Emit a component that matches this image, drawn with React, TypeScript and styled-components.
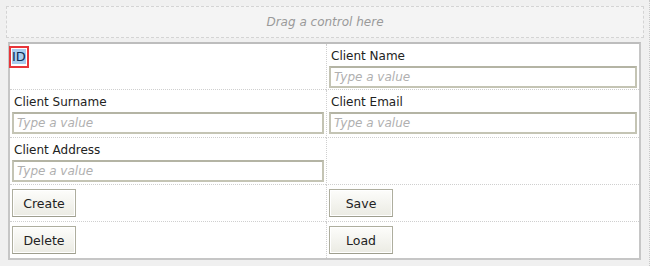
import React from "react";
import styled, { createGlobalStyle } from "styled-components";

const GlobalStyle = createGlobalStyle`
  html, body {
    margin: 0;
    padding: 0;
    background: #f0f0f0;
    font-family: "DejaVu Sans", Verdana, sans-serif;
  }
`;

const Page = styled.div`
  width: 650px;
  height: 266px;
  box-sizing: border-box;
  padding: 6px 6px 0 6px;
  border-right: 1px dotted #c8c8c8;
  display: flex;
  flex-direction: column;
  gap: 4px;
`;

const DropZone = styled.div`
  height: 32px;
  margin-right: -1px;
  box-sizing: border-box;
  border: 1px dashed #d4d4d4;
  background: #f4f4f4;
  display: flex;
  align-items: center;
  justify-content: center;
  color: #9a9a9a;
  font-style: italic;
  font-size: 12px;
`;

const Form = styled.div`
  margin: 0 2px;
  background: #ffffff;
  border: 2px solid #c6c6c6;
  border-top-color: #bdbdbd;
  display: grid;
  grid-template-columns: 316px 1fr;
  grid-template-rows: 46px 48px 47px 37px 36px;
`;

const Cell = styled.div<{ $right?: boolean; $last?: boolean }>`
  box-sizing: border-box;
  padding: 2px 2px 0 2px;
  border-left: ${(p) => (p.$right ? "1px dotted #cfcfcf" : "none")};
  border-bottom: ${(p) => (p.$last ? "none" : "1px dotted #cfcfcf")};
  display: flex;
  flex-direction: column;
  align-items: flex-start;
`;

const Label = styled.span`
  font-size: 12px;
  line-height: 16px;
  color: #222;
  padding: 2px 0 1px 2px;
`;

const SelectedLabel = styled.span`
  display: inline-block;
  border: 2px solid #e8363a;
  padding: 2px 1px;
  margin: 0 0 0 -3px;
  font-size: 13px;
  line-height: 14px;
  color: #0b2a55;
  mark {
    background: #a9cdee;
    color: inherit;
  }
`;

const Input = styled.input`
  box-sizing: border-box;
  width: 100%;
  height: 22px;
  margin-top: 1px;
  border: 2px solid #c4c4b4;
  border-top-color: #b4b4a4;
  background: #fff;
  padding: 0 3px;
  font-family: "DejaVu Sans", Verdana, sans-serif;
  font-size: 12px;
  outline: none;
  &::placeholder {
    color: #b0b0b0;
    font-style: italic;
  }
`;

const Button = styled.button`
  margin-top: 2px;
  width: 64px;
  height: 28px;
  border: 1px solid #aeae9e;
  border-bottom-color: #9e9e8e;
  background: linear-gradient(#fdfdfb, #ebebe3);
  box-shadow: inset 0 0 0 1px #ffffff;
  font-family: "DejaVu Sans", Verdana, sans-serif;
  font-size: 12.5px;
  color: #222;
  padding: 0;
`;

const fields = [{ left: "Client Surname", right: "Client Email" }];

export default function App() {
  return (
    <>
      <GlobalStyle />
      <Page>
        <DropZone>Drag a control here</DropZone>
        <Form>
          <Cell>
            <SelectedLabel>
              <mark>ID</mark>
            </SelectedLabel>
          </Cell>
          <Cell $right>
            <Label>Client Name</Label>
            <Input placeholder="Type a value" />
          </Cell>
          {fields.map((f) => (
            <React.Fragment key={f.left}>
              <Cell>
                <Label>{f.left}</Label>
                <Input placeholder="Type a value" />
              </Cell>
              <Cell $right>
                <Label>{f.right}</Label>
                <Input placeholder="Type a value" />
              </Cell>
            </React.Fragment>
          ))}
          <Cell>
            <Label>Client Address</Label>
            <Input placeholder="Type a value" />
          </Cell>
          <Cell $right />
          <Cell>
            <Button>Create</Button>
          </Cell>
          <Cell $right>
            <Button>Save</Button>
          </Cell>
          <Cell $last>
            <Button>Delete</Button>
          </Cell>
          <Cell $right $last>
            <Button>Load</Button>
          </Cell>
        </Form>
      </Page>
    </>
  );
}
